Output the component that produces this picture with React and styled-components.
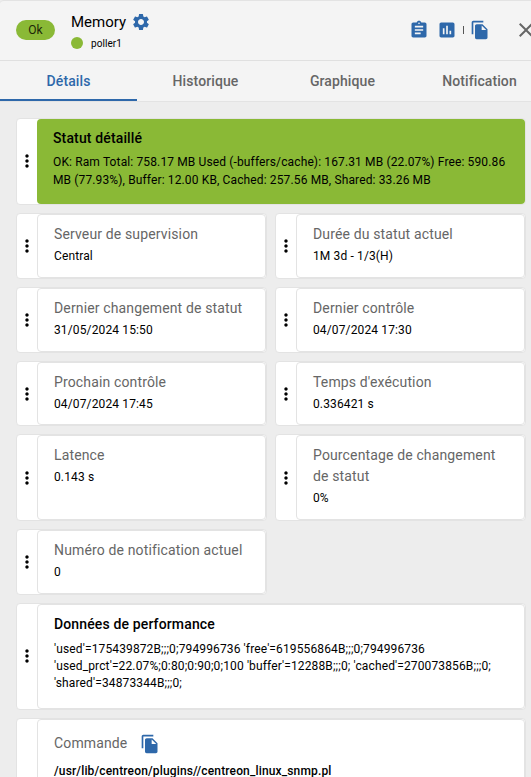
import React from "react";
import styled, { createGlobalStyle } from "styled-components";
import { MdSettings, MdAssignment, MdAssessment, MdClose, MdMoreVert } from "react-icons/md";

const GREEN = "#8ab936";
const BLUE = "#2e68aa";

const GlobalStyle = createGlobalStyle`
  * { box-sizing: border-box; }
  html, body { margin: 0; height: 777px; overflow: hidden; background: #ededed; }
  body { font-family: Roboto, "Liberation Sans", sans-serif; color: #000; }
`;

const Panel = styled.main`
  width: 531px;
  height: 777px;
  overflow: hidden;
  display: flex;
  flex-direction: column;
  background: #ededed;
`;

const Header = styled.header`
  flex: none;
  height: 61px;
  display: flex;
  align-items: center;
  padding: 0 0 2px 16px;
  background: #f4f4f4;
  border-top: 1px solid #e3e3e3;
  border-bottom: 1px solid #e0e0e0;
  border-top-left-radius: 4px;
`;

const StatusChip = styled.span`
  flex: none;
  width: 39px;
  height: 20px;
  border-radius: 10px;
  background: ${GREEN};
  color: #1c2608;
  font-size: 12px;
  line-height: 21px;
  text-align: center;
`;

const Identity = styled.div`
  flex: none;
  margin-left: 16px;
  width: 338px;
  padding-top: 3px;
`;

const NameRow = styled.div`
  display: flex;
  align-items: center;
  height: 24px;
  gap: 5px;
  font-size: 15px;
  letter-spacing: 0px;
  svg { color: ${BLUE}; margin-left: 0.4px; }
`;

const ParentRow = styled.div`
  display: flex;
  align-items: center;
  height: 18px;
  gap: 8px;
  font-size: 10px;
  letter-spacing: 0.05px;
`;

const Dot = styled.i`
  width: 12px;
  height: 12px;
  border-radius: 50%;
  background: ${GREEN};
`;

const Actions = styled.div`
  flex: none;
  display: flex;
  align-items: center;
  color: ${BLUE};
  svg { flex: none; }
`;

const ReportIcon = styled(MdAssessment)`
  margin-left: 8px;
`;

const Divider = styled.i`
  width: 1px;
  height: 8px;
  margin: 0 6px;
  background: #555;
`;

const Close = styled(MdClose)`
  margin-left: 24px;
  color: #666;
`;

const Tabs = styled.nav`
  flex: none;
  display: grid;
  grid-template-columns: repeat(4, 137px);
  height: 41px;
  background: #f4f4f4;
  border-bottom: 1px solid #e3e3e3;
`;

const Tab = styled.div`
  height: 40px;
  border-bottom: 2px solid ${(p) => (p.$active ? BLUE : "transparent")};
  color: ${(p) => (p.$active ? BLUE : "#666")};
  font-size: 14px;
  font-weight: 500;
  letter-spacing: 0.1px;
  line-height: 40px;
  text-align: center;
`;

const Cards = styled.section`
  display: grid;
  grid-template-columns: 251px 251px;
  grid-template-rows: 87px 66px 66px 65px 87px 66px 107px 120px;
  gap: 8px;
  padding: 16px 5px 0 16px;
`;

const Tile = styled.article`
  grid-column: ${(p) => (p.$wide ? "1 / -1" : "auto")};
  display: grid;
  grid-template-columns: 20px 1fr;
  border: 1px solid #e3e3e3;
  border-radius: 4px;
  background: #fff;
`;

const Handle = styled.div`
  display: flex;
  align-items: center;
  justify-content: center;
  padding-bottom: ${(p) => (p.$wide ? "1px" : "0")};
`;

const Content = styled.div`
  min-width: 0;
  border: ${(p) => (p.$ok ? "0" : "1px solid #e3e3e3")};
  border-radius: 4px;
  background: ${(p) => (p.$ok ? GREEN : "#fff")};
  padding: 9px 16px 0;
`;

const Title = styled.h2`
  margin: 0;
  min-height: 21px;
  font-size: 14px;
  line-height: 21px;
  letter-spacing: 0.14px;
  font-weight: ${(p) => (p.$strong ? 500 : 400)};
  color: ${(p) => (p.$strong ? "#000" : "#666")};
`;

const Value = styled.p`
  margin: 1px 0 0;
  font-size: 12px;
  line-height: 21px;
  letter-spacing: 0.13px;
`;

const Output = styled(Value)`
  margin-top: ${(p) => p.$top}px;
  line-height: ${(p) => p.$leading}px;
  white-space: nowrap;
`;

const CommandTitle = styled(Title)`
  display: flex;
  align-items: center;
  height: 29px;
  gap: 13px;
  svg { color: ${BLUE}; }
`;

const Command = styled(Value)`
  margin-top: 3px;
  font-weight: 500;
  letter-spacing: 0.15px;
`;

function CopyIcon() {
  return (
    <svg width="20" height="20" viewBox="0 0 24 24" fill="currentColor">
      <path d="M16 1H4c-1.1 0-2 .9-2 2v14h2V3h12V1zm-1 4l6 6v10c0 1.1-.9 2-2 2H7.99C6.89 23 6 22.1 6 21l.01-14c0-1.1.89-2 1.99-2h7zm-1 7h5.5L14 6.5V12z" />
    </svg>
  );
}

function Card({ wide, ok, handle = true, children }) {
  return (
    <Tile $wide={wide}>
      <Handle $wide={wide}>{handle && <MdMoreVert size={20} />}</Handle>
      <Content $ok={ok}>{children}</Content>
    </Tile>
  );
}

const details = [
  ["Serveur de supervision", "Central"],
  ["Durée du statut actuel", "1M 3d - 1/3(H)"],
  ["Dernier changement de statut", "31/05/2024 15:50"],
  ["Dernier contrôle", "04/07/2024 17:30"],
  ["Prochain contrôle", "04/07/2024 17:45"],
  ["Temps d'exécution", "0.336421 s"],
  ["Latence", "0.143 s"],
  ["Pourcentage de changement de statut", "0%"],
  ["Numéro de notification actuel", "0"],
];

export default function App() {
  return (
    <Panel>
      <GlobalStyle />
      <Header>
        <StatusChip>Ok</StatusChip>
        <Identity>
          <NameRow>Memory<MdSettings size={20} /></NameRow>
          <ParentRow><Dot />poller1</ParentRow>
        </Identity>
        <Actions>
          <MdAssignment size={20} />
          <ReportIcon size={20} />
          <Divider />
          <CopyIcon />
          <Close size={24} />
        </Actions>
      </Header>
      <Tabs>
        <Tab $active>Détails</Tab>
        <Tab>Historique</Tab>
        <Tab>Graphique</Tab>
        <Tab>Notification</Tab>
      </Tabs>
      <Cards>
        <Card wide ok>
          <Title $strong>Statut détaillé</Title>
          <Output $top={4} $leading={18}>
            OK: Ram Total: 758.17 MB Used (-buffers/cache): 167.31 MB (22.07%) Free: 590.86
            <br />
            MB (77.93%), Buffer: 12.00 KB, Cached: 257.56 MB, Shared: 33.26 MB
          </Output>
        </Card>
        {details.map(([title, value]) => (
          <Card key={title}>
            <Title>{title}</Title>
            <Value>{value}</Value>
          </Card>
        ))}
        <Card wide>
          <Title $strong>Données de performance</Title>
          <Output $top={6} $leading={17}>
            'used'=175439872B;;;0;794996736 'free'=619556864B;;;0;794996736
            <br />
            'used_prct'=22.07%;0:80;0:90;0;100 'buffer'=12288B;;;0; 'cached'=270073856B;;;0;
            <br />
            'shared'=34873344B;;;0;
          </Output>
        </Card>
        <Card wide handle={false}>
          <CommandTitle>Commande<CopyIcon /></CommandTitle>
          <Command>/usr/lib/centreon/plugins//centreon_linux_snmp.pl</Command>
        </Card>
      </Cards>
    </Panel>
  );
}
